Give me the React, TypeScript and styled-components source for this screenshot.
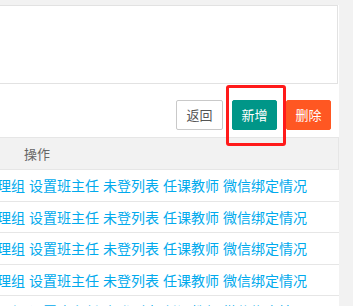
import React from "react";
import styled, { createGlobalStyle } from "styled-components";

const GlobalStyle = createGlobalStyle`
  html, body {
    margin: 0;
    padding: 0;
    background: #f2f2f2;
    font-family: "Noto Sans CJK SC", "Noto Sans", sans-serif;
    overflow: hidden;
  }
`;

const Page = styled.div`
  width: 353px;
  height: 306px;
  padding-top: 5px;
  box-sizing: border-box;
  overflow: hidden;
`;

const Panel = styled.div`
  width: 339px;
  background: #ffffff;
  display: flex;
  flex-direction: column;
  overflow: hidden;
  height: 301px;
  & > * {
    flex: none;
  }
`;

const SearchBox = styled.div`
  height: 79px;
  box-sizing: border-box;
  margin-left: -1px;
  margin-right: 1px;
  border: 1px solid #e2e2e2;
  background: #fff;
`;

const Toolbar = styled.div`
  display: flex;
  justify-content: flex-end;
  align-items: flex-start;
  gap: 9px;
  padding: 16px 8px 0 0;
  height: 53px;
  box-sizing: border-box;
`;

const ButtonWrap = styled.div`
  position: relative;
  display: flex;
`;

const Button = styled.button<{ $variant: "plain" | "primary" | "danger" }>`
  height: 30px;
  padding: 0;
  width: ${(p) => (p.$variant === "plain" ? "47px" : "45px")};
  border-radius: 2px;
  font-family: "Noto Sans CJK SC", "Noto Sans", sans-serif;
  font-size: 13px;
  line-height: 28px;
  cursor: pointer;
  box-sizing: border-box;
  border: 1px solid
    ${(p) =>
      p.$variant === "plain" ? "#c9c9c9" : p.$variant === "primary" ? "#009688" : "#ff5722"};
  background: ${(p) =>
    p.$variant === "plain" ? "#ffffff" : p.$variant === "primary" ? "#009688" : "#ff5722"};
  color: ${(p) => (p.$variant === "plain" ? "#555555" : "#ffffff")};
`;

const Highlight = styled.div`
  position: absolute;
  left: -6px;
  top: -15px;
  width: 60px;
  height: 61px;
  border: 3px solid #ff1a1a;
  border-radius: 3px;
  box-sizing: border-box;
  pointer-events: none;
`;

const Table = styled.div`
  display: flex;
  flex-direction: column;
  & > * {
    flex: none;
  }
`;

const HeaderRow = styled.div`
  height: 33px;
  box-sizing: border-box;
  background: #f2f2f2;
  border-top: 1px solid #e6e6e6;
  border-bottom: 1px solid #e6e6e6;
  border-right: 1px solid #e6e6e6;
  display: flex;
  align-items: center;
  padding-left: 24px;
  font-size: 13px;
  color: #666666;
`;

const Row = styled.div`
  height: 31.5px;
  box-sizing: border-box;
  border-bottom: 1px solid #e6e6e6;
  display: flex;
  align-items: center;
  white-space: nowrap;
  margin-left: -17px;
  gap: 4px;
`;

const Link = styled.a`
  color: #01aaed;
  font-size: 14px;
  text-decoration: none;
  cursor: pointer;
`;

const actions = ["管理组", "设置班主任", "未登列表", "任课教师", "微信绑定情况"];

export default function App() {
  return (
    <>
      <GlobalStyle />
      <Page>
        <Panel>
          <SearchBox />
          <Toolbar>
            <Button $variant="plain">返回</Button>
            <ButtonWrap>
              <Button $variant="primary">新增</Button>
              <Highlight />
            </ButtonWrap>
            <Button $variant="danger">删除</Button>
          </Toolbar>
          <Table>
            <HeaderRow>操作</HeaderRow>
            {[0, 1, 2, 3, 4].map((i) => (
              <Row key={i}>
                {actions.map((a) => (
                  <Link key={a}>{a}</Link>
                ))}
              </Row>
            ))}
          </Table>
        </Panel>
      </Page>
    </>
  );
}
